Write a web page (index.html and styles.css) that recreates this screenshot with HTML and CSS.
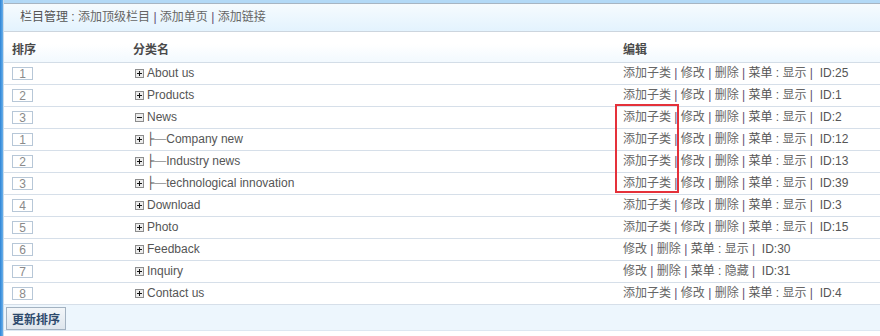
FILE: index.html
```html
<!DOCTYPE html>
<html lang="zh-CN">
<head>
  <meta charset="UTF-8">
  <title>栏目管理</title>
  <link rel="stylesheet" href="styles.css">
</head>
<body>
  <div class="side"></div>
  <div class="main">
    <div class="topline"></div>
    <div class="titlebar">
      栏目管理 : <a href="#">添加顶级栏目</a> <span class="sep">|</span> <a href="#">添加单页</a> <span class="sep">|</span> <a href="#">添加链接</a>
    </div>

    <form>
      <table class="cats">
        <colgroup>
          <col class="c1">
          <col class="c2">
          <col>
        </colgroup>
        <thead>
          <tr>
            <th>排序</th>
            <th>分类名</th>
            <th>编辑</th>
          </tr>
        </thead>
        <tbody>
          <tr>
            <td><input class="ord" type="text" value="1"></td>
            <td><svg class="tog" width="9" height="9" viewBox="0 0 9 9"><rect x="0.5" y="0.5" width="8" height="8" fill="#ececec" stroke="#8c8c8c"/><path d="M2 4.5h5M4.5 2v5" stroke="#111"/></svg>About us</td>
            <td class="ops"><a href="#">添加子类</a> <span class="sep">|</span> <a href="#">修改</a> <span class="sep">|</span> <a href="#">删除</a> <span class="sep">|</span> 菜单 : <a href="#">显示</a> <span class="sep">|</span>&nbsp; ID:25</td>
          </tr>
          <tr>
            <td><input class="ord" type="text" value="2"></td>
            <td><svg class="tog" width="9" height="9" viewBox="0 0 9 9"><rect x="0.5" y="0.5" width="8" height="8" fill="#ececec" stroke="#8c8c8c"/><path d="M2 4.5h5M4.5 2v5" stroke="#111"/></svg>Products</td>
            <td class="ops"><a href="#">添加子类</a> <span class="sep">|</span> <a href="#">修改</a> <span class="sep">|</span> <a href="#">删除</a> <span class="sep">|</span> 菜单 : <a href="#">显示</a> <span class="sep">|</span>&nbsp; ID:1</td>
          </tr>
          <tr>
            <td><input class="ord" type="text" value="3"></td>
            <td><svg class="tog" width="9" height="9" viewBox="0 0 9 9"><rect x="0.5" y="0.5" width="8" height="8" fill="#ececec" stroke="#8c8c8c"/><path d="M2 4.5h5" stroke="#111"/></svg>News</td>
            <td class="ops"><a href="#">添加子类</a> <span class="sep">|</span> <a href="#">修改</a> <span class="sep">|</span> <a href="#">删除</a> <span class="sep">|</span> 菜单 : <a href="#">显示</a> <span class="sep">|</span>&nbsp; ID:2</td>
          </tr>
          <tr>
            <td><input class="ord" type="text" value="1"></td>
            <td><svg class="tog" width="9" height="9" viewBox="0 0 9 9"><rect x="0.5" y="0.5" width="8" height="8" fill="#ececec" stroke="#8c8c8c"/><path d="M2 4.5h5M4.5 2v5" stroke="#111"/></svg><span class="branch">├</span><span class="dash">─</span>Company new</td>
            <td class="ops"><a href="#">添加子类</a> <span class="sep">|</span> <a href="#">修改</a> <span class="sep">|</span> <a href="#">删除</a> <span class="sep">|</span> 菜单 : <a href="#">显示</a> <span class="sep">|</span>&nbsp; ID:12</td>
          </tr>
          <tr>
            <td><input class="ord" type="text" value="2"></td>
            <td><svg class="tog" width="9" height="9" viewBox="0 0 9 9"><rect x="0.5" y="0.5" width="8" height="8" fill="#ececec" stroke="#8c8c8c"/><path d="M2 4.5h5M4.5 2v5" stroke="#111"/></svg><span class="branch">├</span><span class="dash">─</span>Industry news</td>
            <td class="ops"><a href="#">添加子类</a> <span class="sep">|</span> <a href="#">修改</a> <span class="sep">|</span> <a href="#">删除</a> <span class="sep">|</span> 菜单 : <a href="#">显示</a> <span class="sep">|</span>&nbsp; ID:13</td>
          </tr>
          <tr>
            <td><input class="ord" type="text" value="3"></td>
            <td><svg class="tog" width="9" height="9" viewBox="0 0 9 9"><rect x="0.5" y="0.5" width="8" height="8" fill="#ececec" stroke="#8c8c8c"/><path d="M2 4.5h5M4.5 2v5" stroke="#111"/></svg><span class="branch">├</span><span class="dash">─</span>technological innovation</td>
            <td class="ops"><a href="#">添加子类</a> <span class="sep">|</span> <a href="#">修改</a> <span class="sep">|</span> <a href="#">删除</a> <span class="sep">|</span> 菜单 : <a href="#">显示</a> <span class="sep">|</span>&nbsp; ID:39</td>
          </tr>
          <tr>
            <td><input class="ord" type="text" value="4"></td>
            <td><svg class="tog" width="9" height="9" viewBox="0 0 9 9"><rect x="0.5" y="0.5" width="8" height="8" fill="#ececec" stroke="#8c8c8c"/><path d="M2 4.5h5M4.5 2v5" stroke="#111"/></svg>Download</td>
            <td class="ops"><a href="#">添加子类</a> <span class="sep">|</span> <a href="#">修改</a> <span class="sep">|</span> <a href="#">删除</a> <span class="sep">|</span> 菜单 : <a href="#">显示</a> <span class="sep">|</span>&nbsp; ID:3</td>
          </tr>
          <tr>
            <td><input class="ord" type="text" value="5"></td>
            <td><svg class="tog" width="9" height="9" viewBox="0 0 9 9"><rect x="0.5" y="0.5" width="8" height="8" fill="#ececec" stroke="#8c8c8c"/><path d="M2 4.5h5M4.5 2v5" stroke="#111"/></svg>Photo</td>
            <td class="ops"><a href="#">添加子类</a> <span class="sep">|</span> <a href="#">修改</a> <span class="sep">|</span> <a href="#">删除</a> <span class="sep">|</span> 菜单 : <a href="#">显示</a> <span class="sep">|</span>&nbsp; ID:15</td>
          </tr>
          <tr>
            <td><input class="ord" type="text" value="6"></td>
            <td><svg class="tog" width="9" height="9" viewBox="0 0 9 9"><rect x="0.5" y="0.5" width="8" height="8" fill="#ececec" stroke="#8c8c8c"/><path d="M2 4.5h5M4.5 2v5" stroke="#111"/></svg>Feedback</td>
            <td class="ops"><a href="#">修改</a> <span class="sep">|</span> <a href="#">删除</a> <span class="sep">|</span> 菜单 : <a href="#">显示</a> <span class="sep">|</span>&nbsp; ID:30</td>
          </tr>
          <tr>
            <td><input class="ord" type="text" value="7"></td>
            <td><svg class="tog" width="9" height="9" viewBox="0 0 9 9"><rect x="0.5" y="0.5" width="8" height="8" fill="#ececec" stroke="#8c8c8c"/><path d="M2 4.5h5M4.5 2v5" stroke="#111"/></svg>Inquiry</td>
            <td class="ops"><a href="#">修改</a> <span class="sep">|</span> <a href="#">删除</a> <span class="sep">|</span> 菜单 : <a href="#">隐藏</a> <span class="sep">|</span>&nbsp; ID:31</td>
          </tr>
          <tr>
            <td><input class="ord" type="text" value="8"></td>
            <td><svg class="tog" width="9" height="9" viewBox="0 0 9 9"><rect x="0.5" y="0.5" width="8" height="8" fill="#ececec" stroke="#8c8c8c"/><path d="M2 4.5h5M4.5 2v5" stroke="#111"/></svg>Contact us</td>
            <td class="ops"><a href="#">添加子类</a> <span class="sep">|</span> <a href="#">修改</a> <span class="sep">|</span> <a href="#">删除</a> <span class="sep">|</span> 菜单 : <a href="#">显示</a> <span class="sep">|</span>&nbsp; ID:4</td>
          </tr>
        </tbody>
      </table>

      <div class="footer">
        <button type="submit" class="btn">更新排序</button>
      </div>
    </form>
  </div>

  <div class="mark"></div>
</body>
</html>
```

FILE: styles.css
```css
body {
  margin: 0;
  display: flex;
  min-height: 336px;
  font: 12px "Liberation Sans", "Noto Sans CJK SC", sans-serif;
  color: #555;
  background: #fff;
}
a {
  color: #666;
  text-decoration: none;
}
.sep {
  color: #5e4d72;
}
.side {
  width: 3px;
  background: linear-gradient(to right, #2e84d6, #69b0ea);
}
.main {
  flex: 1;
  border-left: 1px solid #cddbe8;
}
.topline {
  height: 3px;
  background: #b3d9f6;
  border-bottom: 1px solid #a7b5c2;
}
.titlebar {
  height: 27px;
  line-height: 27px;
  padding-left: 16px;
  background: linear-gradient(#f6fbfe, #e3f3fe);
  border-bottom: 1px solid #ccd5de;
}
.cats {
  width: 100%;
  border-collapse: collapse;
  table-layout: fixed;
}
.c1 {
  width: 121px;
}
.c2 {
  width: 490px;
}
.cats th {
  text-align: left;
  font-weight: bold;
  color: #4a4a4a;
  padding: 6px 0 0 8px;
  line-height: 24px;
  background: linear-gradient(#fff 40%, #f2f9fe);
  border-bottom: 1px solid #d3dde7;
}
.cats td {
  padding: 0 0 0 8px;
  height: 21px;
  line-height: 21px;
  border-bottom: 1px solid #d6dfe9;
  white-space: nowrap;
  overflow: hidden;
}
.ord {
  width: 21px;
  height: 13px;
  box-sizing: border-box;
  padding: 0;
  border: 1px solid #b7c7d7;
  font: 12px/11px "Liberation Sans", sans-serif;
  color: #8a8a8a;
  text-align: center;
  vertical-align: middle;
}
.tog {
  margin: 0 3px 0 2px;
  vertical-align: -1px;
}
.branch {
  font-family: "DejaVu Sans", sans-serif;
  vertical-align: top;
  color: #555;
}
.dash {
  font-family: "Noto Sans CJK SC", sans-serif;
  vertical-align: top;
  color: #555;
}
.ops {
  color: #555;
}
.footer {
  height: 26px;
  box-sizing: border-box;
  padding: 2px 0 0 2px;
  background: #edf6fd;
  border-bottom: 1px solid #dde8f2;
}
.btn {
  height: 23px;
  padding: 0 5px;
  border: 1px solid #a3b2c1;
  background: linear-gradient(#f3f6f9, #dfe6ed);
  font: bold 12px "Liberation Sans", "Noto Sans CJK SC", sans-serif;
  color: #2e4a6c;
  cursor: pointer;
}
.mark {
  position: absolute;
  left: 615px;
  top: 104px;
  width: 64px;
  height: 89px;
  box-sizing: border-box;
  border: 2px solid #e5313a;
}
```
